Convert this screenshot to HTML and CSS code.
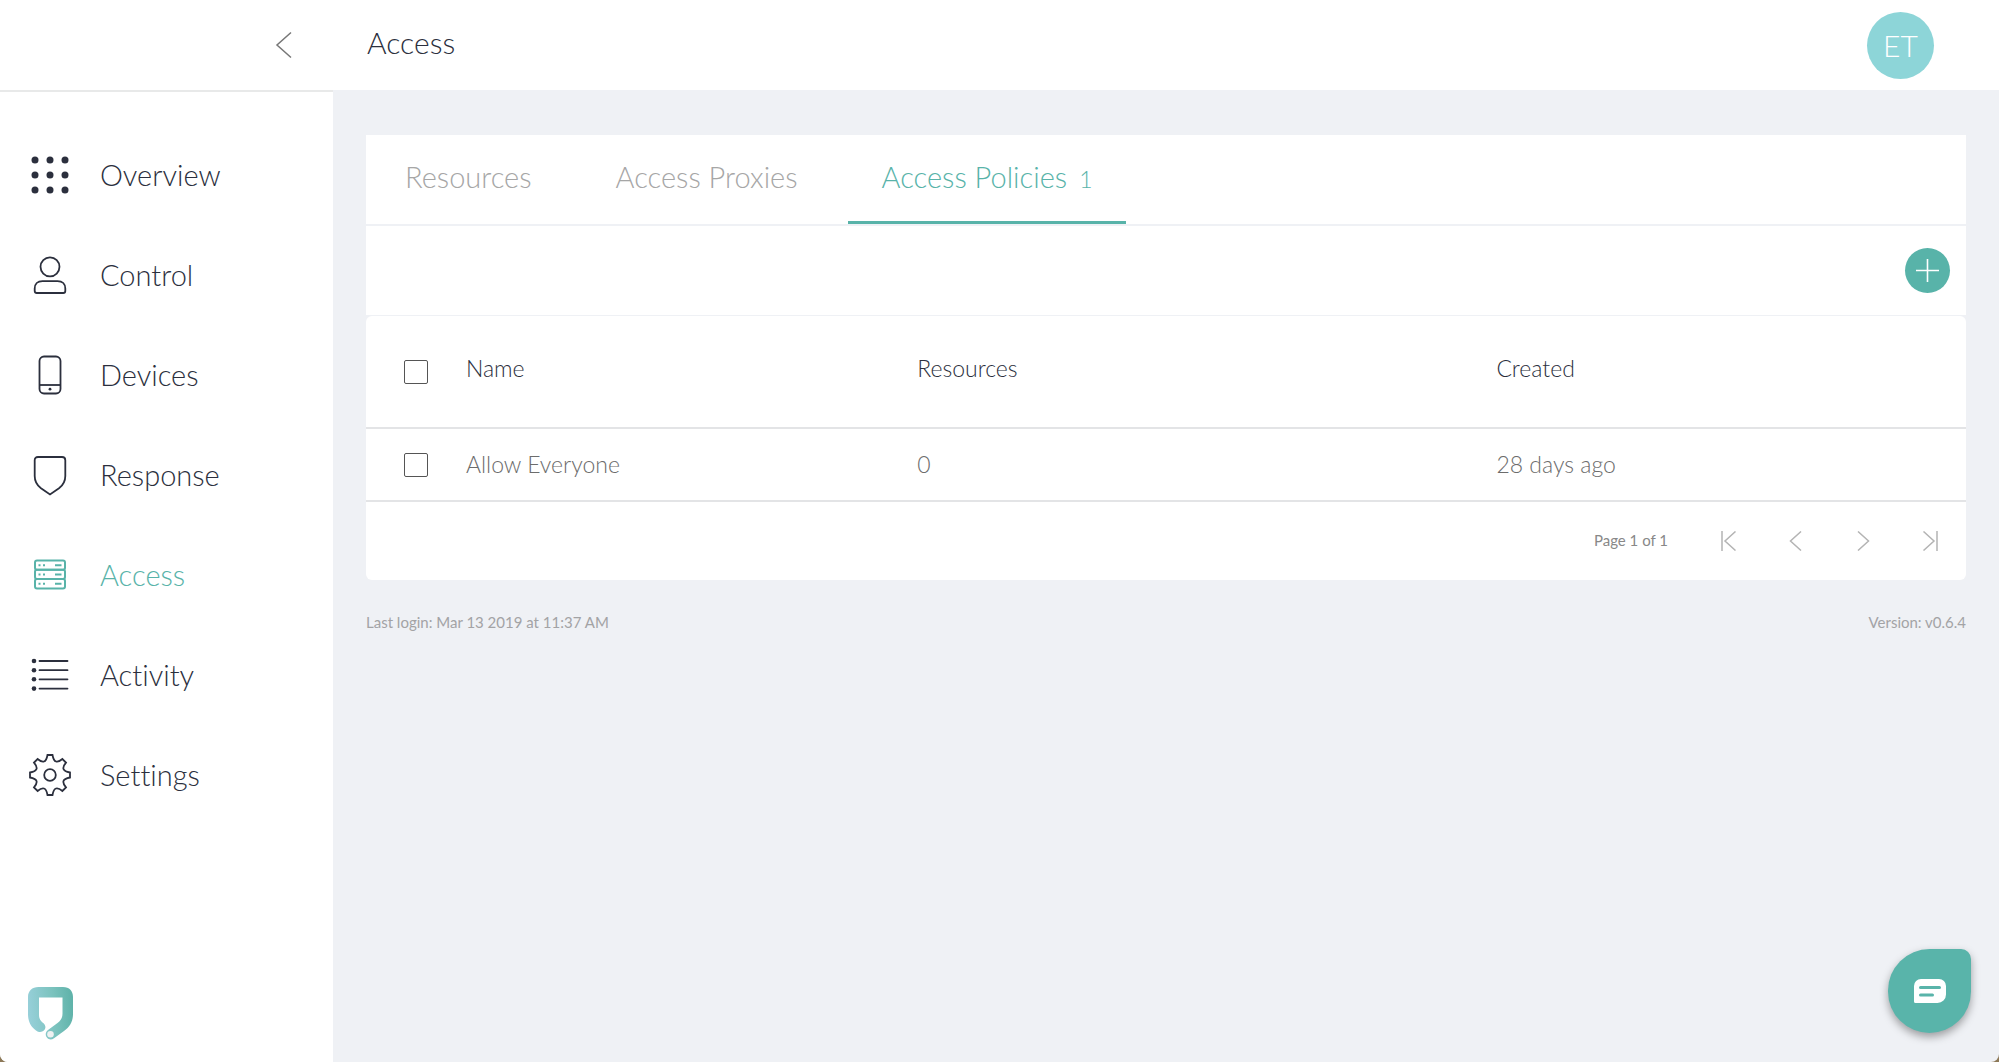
FILE: index.html
```html
<!DOCTYPE html>
<html lang="en">
<head>
<meta charset="utf-8">
<title>Access</title>
<link rel="stylesheet" href="styles.css">
</head>
<body>
<div class="app">
  <aside class="sidebar">
    <div class="sidebar-top">
      <button class="icon-button collapse" type="button" aria-label="Collapse menu">
        <svg width="18" height="28" viewBox="0 0 18 28" fill="none" stroke="currentColor" stroke-width="1.5"><path d="M16 1.5 2 14l14 12.500"/></svg>
      </button>
    </div>
    <nav class="nav" aria-label="Main">
      <a class="nav-item" href="#overview">
        <svg class="nav-icon" viewBox="0 0 44 44" fill="currentColor"><circle cx="7" cy="7" r="3.500"/><circle cx="22" cy="7" r="3.500"/><circle cx="37" cy="7" r="3.500"/><circle cx="7" cy="22" r="3.500"/><circle cx="22" cy="22" r="3.500"/><circle cx="37" cy="22" r="3.500"/><circle cx="7" cy="37" r="3.500"/><circle cx="22" cy="37" r="3.500"/><circle cx="37" cy="37" r="3.500"/></svg>
        <span>Overview</span>
      </a>
      <a class="nav-item" href="#control">
        <svg class="nav-icon" viewBox="0 0 44 44"><circle cx="22" cy="13.800" r="9.500"/><path d="M14.500 28.200h15c5 0 7.800 3 7.800 7.300v2.500c0 1.300-.8 2-2 2H8.700c-1.200 0-2-.7-2-2v-2.500c0-4.300 2.800-7.300 7.800-7.300z"/></svg>
        <span>Control</span>
      </a>
      <a class="nav-item" href="#devices">
        <svg class="nav-icon" viewBox="0 0 44 44"><rect x="11.500" y="3.500" width="21" height="37" rx="4.500"/><path d="M11.500 32h21"/><circle cx="22" cy="36.200" r="1.400" fill="currentColor" stroke="none"/></svg>
        <span>Devices</span>
      </a>
      <a class="nav-item" href="#response">
        <svg class="nav-icon" viewBox="0 0 44 44"><path d="M10 4h24c2.200 0 3.300 1.200 3.300 3.300V23c0 5.500-2.300 9.300-6.300 12.300L22 41.500l-9-6.200c-4-3-6.300-6.800-6.300-12.300V7.300C6.700 5.200 7.800 4 10 4z"/></svg>
        <span>Response</span>
      </a>
      <a class="nav-item active" href="#access" aria-current="page">
        <svg class="nav-icon" viewBox="0 0 44 44"><g stroke-width="2"><rect x="7" y="7.500" width="30" height="9.300" rx="2"/><rect x="7" y="16.800" width="30" height="9.300" rx="2"/><rect x="7" y="26.100" width="30" height="9.300" rx="2"/></g><path d="M10.500 12.200h2m2.500 0h2m10 0h6.500M10.500 21.500h2m2.500 0h2m10 0h6.500M10.500 30.800h2m2.500 0h2m10 0h6.500" stroke-width="2"/></svg>
        <span>Access</span>
      </a>
      <a class="nav-item" href="#activity">
        <svg class="nav-icon" viewBox="0 0 44 44"><g fill="currentColor" stroke="none"><circle cx="6" cy="8" r="2.300"/><circle cx="6" cy="17.200" r="2.300"/><circle cx="6" cy="26.300" r="2.300"/><circle cx="6" cy="35.600" r="2.300"/></g><path d="M11.500 8h28M11.500 17.200h28M11.500 26.300h28M11.500 35.600h28" stroke-linecap="round"/></svg>
        <span>Activity</span>
      </a>
      <a class="nav-item" href="#settings">
        <svg class="nav-icon" viewBox="0 0 44 44"><circle cx="22" cy="22" r="5.800"/><path d="M19.500 2h5c.8 4.500 1.300 5.800 3.500 6.500 2.200.7 3.700-.2 6.400-2.500l3.600 3.600c-2.300 2.700-3.200 4.200-2.500 6.400.7 2.200 2.500 2.700 6.500 3.500v5c-4 .8-5.800 1.300-6.500 3.500-.7 2.200.2 3.700 2.500 6.400L34.400 38c-2.700-2.300-4.200-3.200-6.400-2.500-2.200.7-2.700 2-3.500 6.500h-5c-.8-4.500-1.300-5.800-3.500-6.500-2.200-.7-3.700.2-6.400 2.500L6 34.400c2.300-2.700 3.200-4.200 2.500-6.400C7.800 25.800 6 25.300 2 24.500v-5c4-.8 5.800-1.300 6.500-3.500.7-2.200-.2-3.700-2.500-6.400L9.600 6c2.700 2.300 4.200 3.200 6.400 2.500 2.200-.7 2.700-2 3.500-6.500z"/></svg>
        <span>Settings</span>
      </a>
    </nav>
    <div class="logo">
      <svg width="46" height="54" viewBox="0 0 46 54" role="img" aria-label="Logo">
        <defs><linearGradient id="shield" x1="0" y1=".6" x2="1" y2=".5"><stop offset="0" stop-color="#98d0da"/><stop offset=".6" stop-color="#7ac2bd"/><stop offset="1" stop-color="#60b3aa"/></linearGradient></defs>
        <path d="M10.500 0H35c6.500 0 10 4 10 10v17c0 7-3 13-9 17l-10 7.200c-6 4.300-11.500-4-6-8.200l9.500-7c3.500-2.700 5-5.500 5-9.500V10.500H11V28c0 3 1 5.500 3.500 7.500 7 4.500 0 13-6.500 8C2.500 39.500 0 34 0 27V10C0 4 4 0 10.500 0z" fill="url(#shield)"/>
        <circle cx="22.500" cy="47.200" r="3.300" fill="#eef1f1"/>
      </svg>
    </div>
  </aside>

  <div class="page">
    <header class="topbar">
      <h1>Access</h1>
      <button class="avatar" type="button">ET</button>
    </header>

    <main class="content">
      <div class="tabs" role="tablist">
        <button class="tab" type="button" role="tab">Resources</button>
        <button class="tab" type="button" role="tab">Access Proxies</button>
        <button class="tab selected" type="button" role="tab" aria-selected="true">Access Policies<span class="count">1</span></button>
      </div>
      <div class="toolbar">
        <button class="add" type="button" aria-label="Add policy">
          <svg width="23" height="23" viewBox="0 0 23 23" stroke="currentColor" stroke-width="1.600" fill="none"><path d="M11.500 0v23M0 11.500h23"/></svg>
        </button>
      </div>
      <section class="card">
        <table class="policies">
          <colgroup><col class="col-check"><col class="col-name"><col class="col-resources"><col></colgroup>
          <thead>
            <tr><th><input class="check" type="checkbox" aria-label="Select all"></th><th>Name</th><th>Resources</th><th>Created</th></tr>
          </thead>
          <tbody>
            <tr><td><input class="check" type="checkbox" aria-label="Select Allow Everyone"></td><td>Allow Everyone</td><td>0</td><td>28 days ago</td></tr>
          </tbody>
        </table>
        <div class="pager">
          <span class="pager-label">Page 1 of 1</span>
          <button class="icon-button" type="button" aria-label="First page"><svg width="16" height="20" viewBox="0 0 16 20"><path d="M1 0v20M14.500.500 4 10l10.500 9.500"/></svg></button>
          <button class="icon-button" type="button" aria-label="Previous page"><svg width="16" height="20" viewBox="0 0 16 20"><path d="M13 .500 2.500 10 13 19.500"/></svg></button>
          <button class="icon-button" type="button" aria-label="Next page"><svg width="16" height="20" viewBox="0 0 16 20"><path d="M3 .500 13.500 10 3 19.500"/></svg></button>
          <button class="icon-button" type="button" aria-label="Last page"><svg width="16" height="20" viewBox="0 0 16 20"><path d="M15 0v20M1.500.500 12 10 1.500 19.500"/></svg></button>
        </div>
      </section>
      <footer class="footer"><span>Last login: Mar 13 2019 at 11:37 AM</span><span>Version: v0.6.4</span></footer>
    </main>
  </div>
</div>
<button class="chat" type="button" aria-label="Open chat">
  <svg width="32" height="24" viewBox="0 0 32 24"><path d="M7 0h18a7 7 0 0 1 7 7v8.500a8.500 8.500 0 0 1-8.500 8.500H1.500A1.500 1.500 0 0 1 0 22.500V7a7 7 0 0 1 7-7z" fill="#fff"/><path d="M6.500 8.500h19M6.500 16h12" stroke="#59b4aa" stroke-width="3" stroke-linecap="round"/></svg>
</button>
</body>
</html>
```
FILE: styles.css
```css
:root {
  --teal: #58b3a9;
  --ink: #2b2f3d;
  --grey: #a6a6a6;
  --canvas: #eff1f5;
}

* { box-sizing: border-box; }

html { background: #8d7958; }

body {
  margin: 0;
  font-family: Lato, "Open Sans", sans-serif;
  font-weight: 300;
  font-variant-ligatures: none;
  color: var(--ink);
}

button {
  padding: 0;
  border: 0;
  background: none;
  font: inherit;
  color: inherit;
  cursor: pointer;
}

svg { display: block; }

.app {
  display: grid;
  grid-template-columns: 333px 1fr;
  min-height: 100vh;
  background: var(--canvas);
  border-radius: 0 0 8px 8px;
  overflow: hidden;
}

.sidebar {
  display: flex;
  flex-direction: column;
  background: #fff;
}

.sidebar-top {
  display: flex;
  align-items: center;
  justify-content: flex-end;
  height: 92px;
  padding-right: 40px;
  border-bottom: 2px solid #e8e9e9;
}

.collapse { color: #777; }

.nav { padding-top: 33px; }

.nav-item {
  display: flex;
  align-items: center;
  gap: 28px;
  height: 100px;
  padding-left: 28px;
  font-size: 29px;
  line-height: 36px;
  color: inherit;
  text-decoration: none;
}

.nav-item.active { color: var(--teal); }

.nav-icon {
  width: 44px;
  height: 44px;
  overflow: visible;
}

.nav-icon:not([fill]) {
  fill: none;
  stroke: currentColor;
  stroke-width: 1.8;
}

.logo {
  margin-top: auto;
  padding: 20px 28px 21px;
}

.topbar {
  display: flex;
  align-items: center;
  justify-content: space-between;
  height: 90px;
  padding: 1px 65px 0 34px;
  background: #fff;
}

h1 {
  margin: 0 0 8px;
  font-size: 30px;
  font-weight: 300;
  line-height: 36px;
}

.avatar {
  width: 67px;
  height: 67px;
  padding-bottom: 2px;
  border-radius: 50%;
  background: #8dd5d8;
  color: #fff;
  font-size: 30px;
}

.content { padding: 45px 33px 32px; }

.tabs {
  display: flex;
  gap: 16px;
  height: 89px;
  padding-left: 5px;
  background: #fff;
}

.tab {
  padding: 0 34px 4px;
  border-bottom: 3px solid transparent;
  font-size: 29px;
  color: var(--grey);
}

.tab.selected {
  color: var(--teal);
  border-color: var(--teal);
}

.count {
  margin-left: 12px;
  font-size: 23px;
}

.toolbar {
  display: flex;
  align-items: center;
  justify-content: flex-end;
  height: 89px;
  margin: 2px 0 1px;
  padding-right: 16px;
  background: #fff;
}

.add {
  display: grid;
  place-items: center;
  width: 45px;
  height: 45px;
  border-radius: 50%;
  background: var(--teal);
  color: #fff;
}

.card {
  background: #fff;
  border-radius: 6px;
}

.policies {
  width: 100%;
  border-collapse: collapse;
  table-layout: fixed;
  font-size: 23px;
  line-height: 28px;
}

.col-check { width: 100px; }
.col-name { width: 28.2%; }
.col-resources { width: 36.2%; }

.policies th,
.policies td {
  padding: 0;
  border-bottom: 2px solid #e3e4e6;
  font-weight: 300;
  text-align: left;
}

.policies th { height: 112px; }

.policies td {
  height: 73px;
  color: #6c6c6c;
}

.policies th:first-child,
.policies td:first-child { padding-left: 38px; }

.policies th:not(:first-child) { padding-bottom: 8px; }
.policies td:not(:first-child) { padding-bottom: 2px; }

.check {
  display: block;
  appearance: none;
  width: 24px;
  height: 24px;
  margin: 0;
  border: 1px solid #555;
  border-radius: 2px;
  background: #fff;
}

.check:checked { background: var(--teal); }

.pager {
  display: flex;
  align-items: center;
  justify-content: flex-end;
  height: 78px;
  padding-right: 3px;
}

.pager-label {
  margin-right: 27px;
  padding-bottom: 2px;
  font-size: 15px;
  font-weight: 400;
  color: #888;
}

.icon-button {
  display: grid;
  place-items: center;
}

.pager .icon-button {
  width: 67px;
  height: 40px;
}

.pager svg {
  fill: none;
  stroke: #b4b4b4;
  stroke-width: 1.5;
}

.footer {
  display: flex;
  justify-content: space-between;
  padding-top: 32px;
  font-size: 15px;
  font-weight: 400;
  line-height: 20px;
  color: #a3a3a5;
}

.chat {
  position: fixed;
  right: 28px;
  bottom: 29px;
  display: grid;
  place-items: center;
  width: 83px;
  height: 84px;
  border-radius: 42px 10px 42px 42px;
  background: #59b4aa;
  box-shadow: 0 4px 8px rgba(0, 0, 0, .35);
}
```
